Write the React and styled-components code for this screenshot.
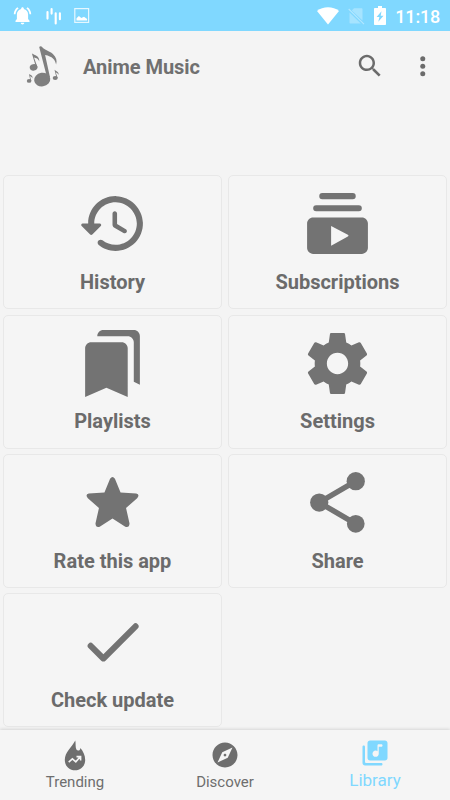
import React from "react";
import styled, { createGlobalStyle } from "styled-components";

const GlobalStyle = createGlobalStyle`
  * { box-sizing: border-box; }
  body { margin: 0; background: #f4f4f4; font-family: Roboto, sans-serif; }
`;

const Screen = styled.div`
  width: 450px;
  height: 800px;
  display: flex;
  flex-direction: column;
  overflow: hidden;
  background: #f4f4f4;
  color: #6e6e6e;
`;

const StatusBar = styled.header`
  flex: none;
  height: 31px;
  display: flex;
  align-items: center;
  justify-content: space-between;
  padding: 0 10px 0 12px;
  background: #80d8ff;
  color: #fff;
`;

const StatusGroup = styled.div`
  display: flex;
  align-items: center;
  gap: ${(p) => p.$gap}px;
`;

const Clock = styled.span`
  font-size: 18px;
  font-weight: 500;
  line-height: 20px;
  letter-spacing: -0.2px;
  padding-top: 2px;
`;

const Icon = styled.svg`
  display: block;
  flex: none;
  width: ${(p) => p.$w}px;
  height: ${(p) => p.$h || p.$w}px;
  fill: currentColor;
  overflow: visible;
`;

const Toolbar = styled.div`
  flex: none;
  height: 71px;
  display: flex;
  align-items: center;
  padding: 0 12px 0 24px;
  color: #737373;
`;

const Title = styled.h1`
  flex: 1;
  margin: 0 0 0 19px;
  font-size: 20px;
  font-weight: 700;
  letter-spacing: -0.05px;
  line-height: 24px;
  color: #707070;
`;

const Actions = styled.div`
  display: flex;
  align-items: center;
  gap: 23px;
  margin-top: -1px;
  color: #6b6b6b;
`;

const Library = styled.main`
  flex: 1;
  min-height: 0;
  padding: 73.3px 3px 0;
  display: grid;
  grid-template-columns: 1fr 1fr;
  grid-auto-rows: 134px;
  column-gap: 6px;
  row-gap: 5.3px;
`;

const Card = styled.div`
  display: flex;
  flex-direction: column;
  align-items: center;
  padding-top: 11px;
  border: 1px solid #e8e8e8;
  border-radius: 5px;
  background: #f5f5f5;
  color: #737373;
`;

const CardLabel = styled.span`
  margin-top: 9.7px;
  font-size: 20px;
  font-weight: 700;
  line-height: 24px;
  color: #6b6b6b;
`;

const BottomNav = styled.nav`
  flex: none;
  height: 70px;
  position: relative;
  display: grid;
  grid-template-columns: repeat(3, 1fr);
  background: #f5f5f5;
  box-shadow: 0 -1px 3px rgba(0, 0, 0, 0.12);
`;

const NavItem = styled.div`
  display: flex;
  flex-direction: column;
  align-items: center;
  padding-top: ${(p) => (p.$active ? 7.5 : 9.7)}px;
  color: ${(p) => (p.$active ? "#80d8ff" : "#6e6e6e")};
`;

const NavLabel = styled.span`
  margin-top: ${(p) => p.$offset}px;
  font-size: ${(p) => (p.$active ? 17 : 15)}px;
  line-height: 20px;
`;

const Bell = () => (
  <Icon $w={21} viewBox="0 0 24 24">
    <path d="M7.58 4.08L6.15 2.65C3.75 4.48 2.17 7.3 2.03 10.5h2c.15-2.65 1.51-4.97 3.55-6.42zm12.39 6.42h2c-.15-3.2-1.73-6.02-4.12-7.85l-1.42 1.43c2.02 1.45 3.39 3.77 3.54 6.42zM18.4 11c0-3.07-1.9-5.64-4.9-6.32V4c0-.83-.67-1.5-1.5-1.5s-1.5.67-1.5 1.5v.68C7.5 5.36 5.6 7.92 5.6 11v5l-1.6 2v1.3h16V18l-1.6-2v-5zm-6.4 11.3c1.1 0 2-.9 2-2h-4c0 1.1.9 2 2 2z" />
  </Icon>
);

const Bars = () => (
  <Icon $w={17} $h={18} viewBox="0 0 17 18">
    <path
      d="M1.5 5v6.6M5.6 2v4.6M9.7 6.2v10.3M13.9 6.2v6"
      stroke="currentColor"
      strokeWidth="2.1"
      strokeLinecap="round"
    />
  </Icon>
);

const Picture = () => (
  <Icon $w={15} viewBox="0 0 15 15">
    <rect x="-.2" y=".6" width="13.8" height="13.8" fill="none" stroke="currentColor" strokeWidth="1.2" opacity=".8" />
    <path d="M1.5 12.5V10.2L3.9 8l2.4 1.9L9 8.700l3.100 2.200v1.600z" />
  </Icon>
);

const Wifi = () => (
  <Icon $w={22} $h={18} viewBox="0 0 22 18">
    <path d="M0 4C5.8-.9 16.2-.9 22 4L11 17.5z" />
  </Icon>
);

const NoSim = () => (
  <Icon $w={17} $h={18} viewBox="0 0 17 18">
    <path d="M6 1.2h7.5c.6 0 1 .4 1 1v11.2L3.8 3.4zM1.5 5.4L12.8 16.5H2.5c-.6 0-1-.4-1-1z" opacity=".3" />
    <path d="M.7 2L16 17.2" stroke="currentColor" strokeWidth="1.1" opacity=".4" />
  </Icon>
);

const Battery = () => (
  <Icon $w={12} $h={19} viewBox="0 0 12 19">
    <path
      fillRule="evenodd"
      d="M4 0h4v2h3c.6 0 1 .4 1 1v15c0 .6-.4 1-1 1H1c-.6 0-1-.4-1-1V3c0-.6.4-1 1-1h3zM7.5 5.2L2.6 11h2.8L4.3 15.8 9.5 9.7H6.7z"
    />
  </Icon>
);

const Logo = () => (
  <Icon $w={40} viewBox="0 0 40 40">
    <g fill="#7f7f7f">
      <ellipse cx="18.2" cy="32.6" rx="8.1" ry="6.8" transform="rotate(-8 18.2 32.6)" />
      <path d="M15.2 0c.9-1 2.300-.9 3.100.3 2.300 3 6.900 3.400 10.600 6.600 3.400 3.100 4.400 6.700 3.200 10.700-.7-4.900-3.900-8.400-11-9.700l4.900 22.300-2.700 1.200z" />
      <ellipse cx="9.6" cy="20.4" rx="3.9" ry="3.2" transform="rotate(-12 9.6 20.4)" />
      <path d="M7.9 6.600c2.800 1.700 7.600 2.200 7.400 8-1-2.900-3-3.700-5.300-4.100l3.500 9.700-1.300.6z" />
      <ellipse cx="5.1" cy="33.900" rx="2.300" ry="1.900" />
      <path d="M5 26.900c2 1.200 3.900 1.600 3.400 4.500-.4-1.500-1.300-1.900-2.400-2.200l1.400 4.700-1 .2z" />
      <ellipse cx="31.200" cy="31" rx="2.500" ry="2.100" />
      <path d="M30.500 22.700c1.500 1.500 4.700 2 4 5.200-.7-1.700-1.700-2.100-2.700-2.400l1.900 5.500-1.100.2z" />
    </g>
  </Icon>
);

const Search = () => (
  <Icon $w={30} viewBox="0 0 24 24">
    <path d="M15.5 14h-.79l-.28-.27C15.41 12.59 16 11.11 16 9.5 16 5.91 13.09 3 9.5 3S3 5.91 3 9.5 5.91 16 9.5 16c1.61 0 3.09-.59 4.23-1.57l.27.28v.79l5 4.99L20.49 19l-4.99-5zm-6 0C7.01 14 5 11.99 5 9.5S7.01 5 9.5 5 14 7.01 14 9.5 11.99 14 9.5 14z" />
  </Icon>
);

const More = () => (
  <Icon $w={30} viewBox="0 0 24 24">
    <circle cx="11.8" cy="6.1" r="2" />
    <circle cx="11.8" cy="12.1" r="2" />
    <circle cx="11.8" cy="18.1" r="2" />
  </Icon>
);

const cards = [
  {
    label: "History",
    art: (
      <path d="M13.26 3C8.17 2.86 4 6.95 4 12H2.21c-.45 0-.67.54-.35.85l2.79 2.8c.2.2.51.2.71 0l2.79-2.8c.31-.31.09-.85-.36-.85H6c0-3.9 3.18-7.05 7.1-7 3.72.05 6.85 3.18 6.9 6.9.05 3.91-3.1 7.1-7 7.1-1.61 0-3.1-.55-4.28-1.48-.4-.31-.96-.28-1.32.08-.42.42-.39 1.13.08 1.49C8.86 20.29 10.85 21 13 21c5.05 0 9.14-4.17 9-9.26-.13-4.69-4.05-8.61-8.74-8.74zm-.51 5c-.41 0-.75.34-.75.75v3.68c0 .35.19.68.49.86l3.12 1.85c.36.21.82.09 1.03-.26.21-.36.09-.82-.26-1.03l-2.88-1.71v-3.4c0-.4-.34-.74-.75-.74z" />
    ),
  },
  {
    label: "Subscriptions",
    art: (
      <path
        fillRule="evenodd"
        d="M7 2h10a1 1 0 0 1 0 2H7a1 1 0 0 1 0-2zM5 6h14a1 1 0 0 1 0 2H5a1 1 0 0 1 0-2zM4 10h16c1.1 0 2 .9 2 2v8c0 1.1-.9 2-2 2H4c-1.1 0-2-.9-2-2v-8c0-1.1.9-2 2-2zM9.9 12.8v6.5l5.5-3c.3-.2.3-.4 0-.6z"
      />
    ),
  },
  {
    label: "Playlists",
    art: (
      <path d="M19 18l2 1V3c0-1.1-.9-2-2-2H8.99C7.89 1 7 1.9 7 3h10c1.1 0 2 .9 2 2v13zM15 5H5c-1.1 0-2 .9-2 2v16l7-3 7 3V7c0-1.1-.9-2-2-2z" />
    ),
  },
  {
    label: "Settings",
    art: (
      <path d="M19.43 12.98c.04-.32.07-.64.07-.98s-.03-.66-.07-.98l2.11-1.65c.19-.15.24-.42.12-.64l-2-3.46c-.12-.22-.39-.3-.61-.22l-2.49 1c-.52-.4-1.08-.73-1.69-.98l-.38-2.65C14.46 2.18 14.25 2 14 2h-4c-.25 0-.46.18-.49.42l-.38 2.65c-.61.25-1.17.59-1.69.98l-2.49-1c-.23-.09-.49 0-.61.22l-2 3.46c-.13.22-.07.49.12.64l2.11 1.65c-.04.32-.07.65-.07.98s.03.66.07.98l-2.11 1.65c-.19.15-.24.42-.12.64l2 3.46c.12.22.39.3.61.22l2.49-1c.52.4 1.08.73 1.69.98l.38 2.65c.03.24.24.42.49.42h4c.25 0 .46-.18.49-.42l.38-2.65c.61-.25 1.17-.59 1.69-.98l2.49 1c.23.09.49 0 .61-.22l2-3.46c.12-.22.07-.49-.12-.64l-2.11-1.65zM12 15.5c-1.93 0-3.5-1.57-3.5-3.5s1.57-3.5 3.5-3.5 3.5 1.57 3.5 3.5-1.57 3.5-3.5 3.5z" />
    ),
  },
  {
    label: "Rate this app",
    art: (
      <path d="M11.2 4.2Q12 3.1 12.8 4.2L14.65 8.75 19.8 9.05Q21.1 9.4 20.1 10.6L16.45 13.8 17.6 18.9Q17.5 20.4 16.2 19.95L12 17.3 7.8 19.95Q6.5 20.4 6.4 18.9L7.55 13.8 3.9 10.6Q2.9 9.4 4.2 9.05L9.35 8.75z" />
    ),
  },
  {
    label: "Share",
    art: (
      <>
        <path d="M18 5L6 12l12 7" fill="none" stroke="currentColor" strokeWidth="1.8" />
        <circle cx="18" cy="5" r="3" />
        <circle cx="6" cy="12" r="3" />
        <circle cx="18" cy="19" r="2.92" />
      </>
    ),
  },
  {
    label: "Check update",
    art: (
      <path d="M9 16.17L5.53 12.7a.996.996 0 1 0-1.41 1.41l4.18 4.18c.39.39 1.02.39 1.41 0L20.29 7.71a.996.996 0 1 0-1.41-1.41L9 16.17z" />
    ),
  },
];

const Flame = () => (
  <Icon $w={22} $h={31} viewBox="0 0 22 31">
    <path d="M11.3 .5c.6 3-.1 6.8 1.1 9 1.4 2.1 4 .9 4-1.6 2.7 3.1 4.8 7.2 4.8 12.1C21.2 26 16.7 30.3 11 30.3S.8 26 .8 20C.8 12 7.5 7.5 11.3.5z" />
    <path d="M4.7 22.1l3.7-3.2 3.4 2.9 4-4.6M12.5 16.6h4.1v4" fill="none" stroke="#f5f5f5" strokeWidth="1.6" />
  </Icon>
);

const Compass = () => (
  <Icon $w={30} viewBox="0 0 24 24">
    <path d="M12 10.9c-.61 0-1.1.49-1.1 1.1s.49 1.1 1.1 1.1c.61 0 1.1-.49 1.1-1.1s-.49-1.1-1.1-1.1zM12 2C6.48 2 2 6.48 2 12s4.48 10 10 10 10-4.48 10-10S17.52 2 12 2zm2.19 12.19L6 18l3.81-8.19L18 6l-3.81 8.19z" />
  </Icon>
);

const MusicLibrary = () => (
  <Icon $w={30} viewBox="0 0 24 24">
    <path d="M20 2H8c-1.1 0-2 .9-2 2v12c0 1.1.9 2 2 2h12c1.1 0 2-.9 2-2V4c0-1.1-.9-2-2-2zm-3 5h-2v5.5c0 1.38-1.12 2.5-2.5 2.5S10 13.88 10 12.5s1.12-2.5 2.5-2.5c.57 0 1.08.19 1.5.51V6c0-.55.45-1 1-1h2c.55 0 1 .45 1 1s-.45 1-1 1zM3 6c-.55 0-1 .45-1 1v13c0 1.1.9 2 2 2h13c.55 0 1-.45 1-1s-.45-1-1-1H5c-.55 0-1-.45-1-1V7c0-.55-.45-1-1-1z" />
  </Icon>
);

export default function App() {
  return (
    <Screen>
      <GlobalStyle />
      <StatusBar>
        <StatusGroup $gap={12.5}>
          <Bell />
          <Bars />
          <Picture />
        </StatusGroup>
        <StatusGroup $gap={9}>
          <Wifi />
          <NoSim />
          <Battery />
          <Clock>11:18</Clock>
        </StatusGroup>
      </StatusBar>
      <Toolbar>
        <Logo />
        <Title>Anime Music</Title>
        <Actions>
          <Search />
          <More />
        </Actions>
      </Toolbar>
      <Library>
        {cards.map(({ label, art }) => (
          <Card key={label}>
            <Icon $w={73} viewBox="0 0 24 24">{art}</Icon>
            <CardLabel>{label}</CardLabel>
          </Card>
        ))}
      </Library>
      <BottomNav>
        <NavItem>
          <Flame />
          <NavLabel $offset={1}>Trending</NavLabel>
        </NavItem>
        <NavItem>
          <Compass />
          <NavLabel $offset={2}>Discover</NavLabel>
        </NavItem>
        <NavItem $active>
          <MusicLibrary />
          <NavLabel $active $offset={2.5}>Library</NavLabel>
        </NavItem>
      </BottomNav>
    </Screen>
  );
}
